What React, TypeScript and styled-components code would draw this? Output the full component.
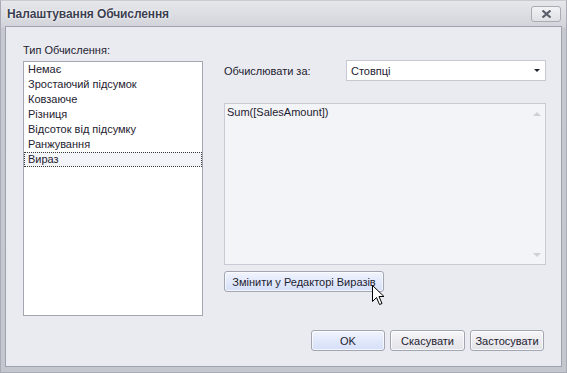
import React, { FC } from 'react';
import styled, { createGlobalStyle } from 'styled-components';

const GlobalStyle = createGlobalStyle`
  html, body {
    margin: 0;
    padding: 0;
    background: #c4c7cf;
  }
  body {
    font-family: "Liberation Sans", Arial, sans-serif;
    font-size: 11px;
    color: #1e2230;
  }
`;

const DialogWindow = styled.div`
  position: relative;
  box-sizing: border-box;
  width: 567px;
  height: 373px;
  display: flex;
  flex-direction: column;
  padding: 0 4px 5px 4px;
  background: linear-gradient(to bottom, #e6e7eb 0, #d2d4da 26px, #c7c9d1 27px, #c5c7cf 100%);
  border: 1px solid #a9acb6;
  border-top-color: #c9cbd2;
`;

const TitleBar = styled.div`
  height: 25px;
  display: flex;
  align-items: center;
  justify-content: space-between;
  padding: 0 1px 0 2px;
`;

const Title = styled.h1`
  margin: 0;
  font-size: 12px;
  font-weight: bold;
  color: #3b4051;
  text-shadow: 0 0 3px #ffffff, 0 0 1px #ffffff;
  letter-spacing: -0.1px;
`;

const CloseButton = styled.button`
  box-sizing: border-box;
  width: 30px;
  height: 16px;
  margin-top: 1px;
  display: flex;
  align-items: center;
  justify-content: center;
  padding: 0;
  border: 1px solid #a8abb4;
  border-radius: 3px;
  background: linear-gradient(to bottom, #f2f3f5, #dfe0e5);
`;

const Client = styled.div`
  position: relative;
  box-sizing: border-box;
  flex: 1;
  display: flex;
  flex-direction: column;
  border: 1px solid #9ea2ae;
  background: #eaebf0;
  padding: 16px 17px 15px 17px;
`;

const Panels = styled.div`
  display: grid;
  grid-template-columns: 180px 322px;
  column-gap: 21px;
`;

const Column = styled.div`
  display: flex;
  flex-direction: column;
`;

const FieldLabel = styled.label`
  line-height: 14px;
  color: #1e2230;
`;

const ListBox = styled.ul`
  box-sizing: border-box;
  list-style: none;
  margin: 4px 0 0 0;
  padding: 0;
  height: 255px;
  background: #ffffff;
  border: 1px solid #a3a7b2;
`;

const ListItem = styled.li<{ $focused?: boolean }>`
  box-sizing: border-box;
  height: 15px;
  line-height: 13px;
  padding: 0 3px;
  color: #1e2230;
  border: 1px ${p => (p.$focused ? 'dotted #3a3a3a' : 'solid transparent')};
  background: ${p => (p.$focused ? '#f3f4f7' : 'transparent')};
`;

const ComboRow = styled.div`
  display: flex;
  align-items: center;
  justify-content: space-between;
  margin-top: 17px;
`;

const ComboBox = styled.div`
  box-sizing: border-box;
  width: 200px;
  height: 21px;
  display: flex;
  align-items: center;
  justify-content: space-between;
  padding: 0 5px 0 4px;
  background: #ffffff;
  border: 1px solid #c6c9d1;
`;

const ArrowDown = styled.span<{ $color: string; $size: number }>`
  width: 0;
  height: 0;
  border-left: ${p => p.$size}px solid transparent;
  border-right: ${p => p.$size}px solid transparent;
  border-top: ${p => p.$size}px solid ${p => p.$color};
`;

const ArrowUp = styled.span<{ $color: string; $size: number }>`
  width: 0;
  height: 0;
  border-left: ${p => p.$size}px solid transparent;
  border-right: ${p => p.$size}px solid transparent;
  border-bottom: ${p => p.$size}px solid ${p => p.$color};
`;

const Memo = styled.div`
  box-sizing: border-box;
  height: 162px;
  margin-top: 22px;
  display: flex;
  justify-content: space-between;
  padding: 1px 0 0 2px;
  background: #f3f4f7;
  border: 1px solid #c8cbd3;
`;

const MemoText = styled.div`
  line-height: 15px;
  color: #1e2230;
`;

const ScrollStrip = styled.div`
  width: 17px;
  display: flex;
  flex-direction: column;
  justify-content: space-between;
  align-items: center;
  padding: 7px 0 7px 0;
`;

const PushButton = styled.button<{ $primary?: boolean; $width: number }>`
  box-sizing: border-box;
  width: ${p => p.$width}px;
  height: 21px;
  padding: 0;
  font-family: "Liberation Sans", Arial, sans-serif;
  font-size: 11px;
  color: #1e2230;
  border: 1px solid #a2a6b1;
  border-radius: 3px;
  background: ${p =>
    p.$primary
      ? 'linear-gradient(to bottom, #f1f4fd 0%, #e2e9fb 50%, #d5dff8 100%)'
      : 'linear-gradient(to bottom, #f7f7f9 0%, #ececf0 50%, #e2e3e8 100%)'};
  box-shadow: inset 0 0 0 1px rgba(255, 255, 255, 0.7);
`;

const EditorButtonRow = styled.div`
  margin-top: 6px;
`;

const Footer = styled.div`
  margin-top: auto;
  display: flex;
  justify-content: flex-end;
  gap: 5px;
`;

const Cursor = styled.svg`
  position: absolute;
  left: 366px;
  top: 258px;
  pointer-events: none;
`;

const calcTypes = [
  'Немає',
  'Зростаючий підсумок',
  'Ковзаюче',
  'Різниця',
  'Відсоток від підсумку',
  'Ранжування',
  'Вираз',
];

const App: FC = () => {
  return (
    <>
      <GlobalStyle />
      <DialogWindow>
        <TitleBar>
          <Title>Налаштування Обчислення</Title>
          <CloseButton aria-label="close">
            <svg width="11" height="8" viewBox="0 0 11 8">
              <path d="M1.5 0.5 L9.5 7.5 M9.5 0.5 L1.5 7.5" stroke="#5a5e6a" strokeWidth="2.2" />
            </svg>
          </CloseButton>
        </TitleBar>
        <Client>
          <Panels>
            <Column>
              <FieldLabel>Тип Обчислення:</FieldLabel>
              <ListBox>
                {calcTypes.map((t, i) => (
                  <ListItem key={t} $focused={i === calcTypes.length - 1}>
                    {t}
                  </ListItem>
                ))}
              </ListBox>
            </Column>
            <Column>
              <ComboRow>
                <FieldLabel>Обчислювати за:</FieldLabel>
                <ComboBox>
                  <span>Стовпці</span>
                  <ArrowDown $color="#1f2330" $size={3.5} />
                </ComboBox>
              </ComboRow>
              <Memo>
                <MemoText>Sum([SalesAmount])</MemoText>
                <ScrollStrip>
                  <ArrowUp $color="#cdd0d6" $size={4} />
                  <ArrowDown $color="#cdd0d6" $size={4} />
                </ScrollStrip>
              </Memo>
              <EditorButtonRow>
                <PushButton $primary $width={160}>
                  Змінити у Редакторі Виразів
                </PushButton>
              </EditorButtonRow>
            </Column>
          </Panels>
          <Footer>
            <PushButton $primary $width={74}>OK</PushButton>
            <PushButton $width={75}>Скасувати</PushButton>
            <PushButton $width={74}>Застосувати</PushButton>
          </Footer>
          <Cursor width="13" height="21" viewBox="0 0 13 21">
            <path
              d="M0.5 0.5 L0.5 16.5 L4.5 12.5 L7.5 19.5 L10 18.5 L7 11.5 L12 11.5 Z"
              fill="#ffffff"
              stroke="#000000"
              strokeWidth="1"
              strokeLinejoin="miter"
            />
          </Cursor>
        </Client>
      </DialogWindow>
    </>
  );
};

export default App;
